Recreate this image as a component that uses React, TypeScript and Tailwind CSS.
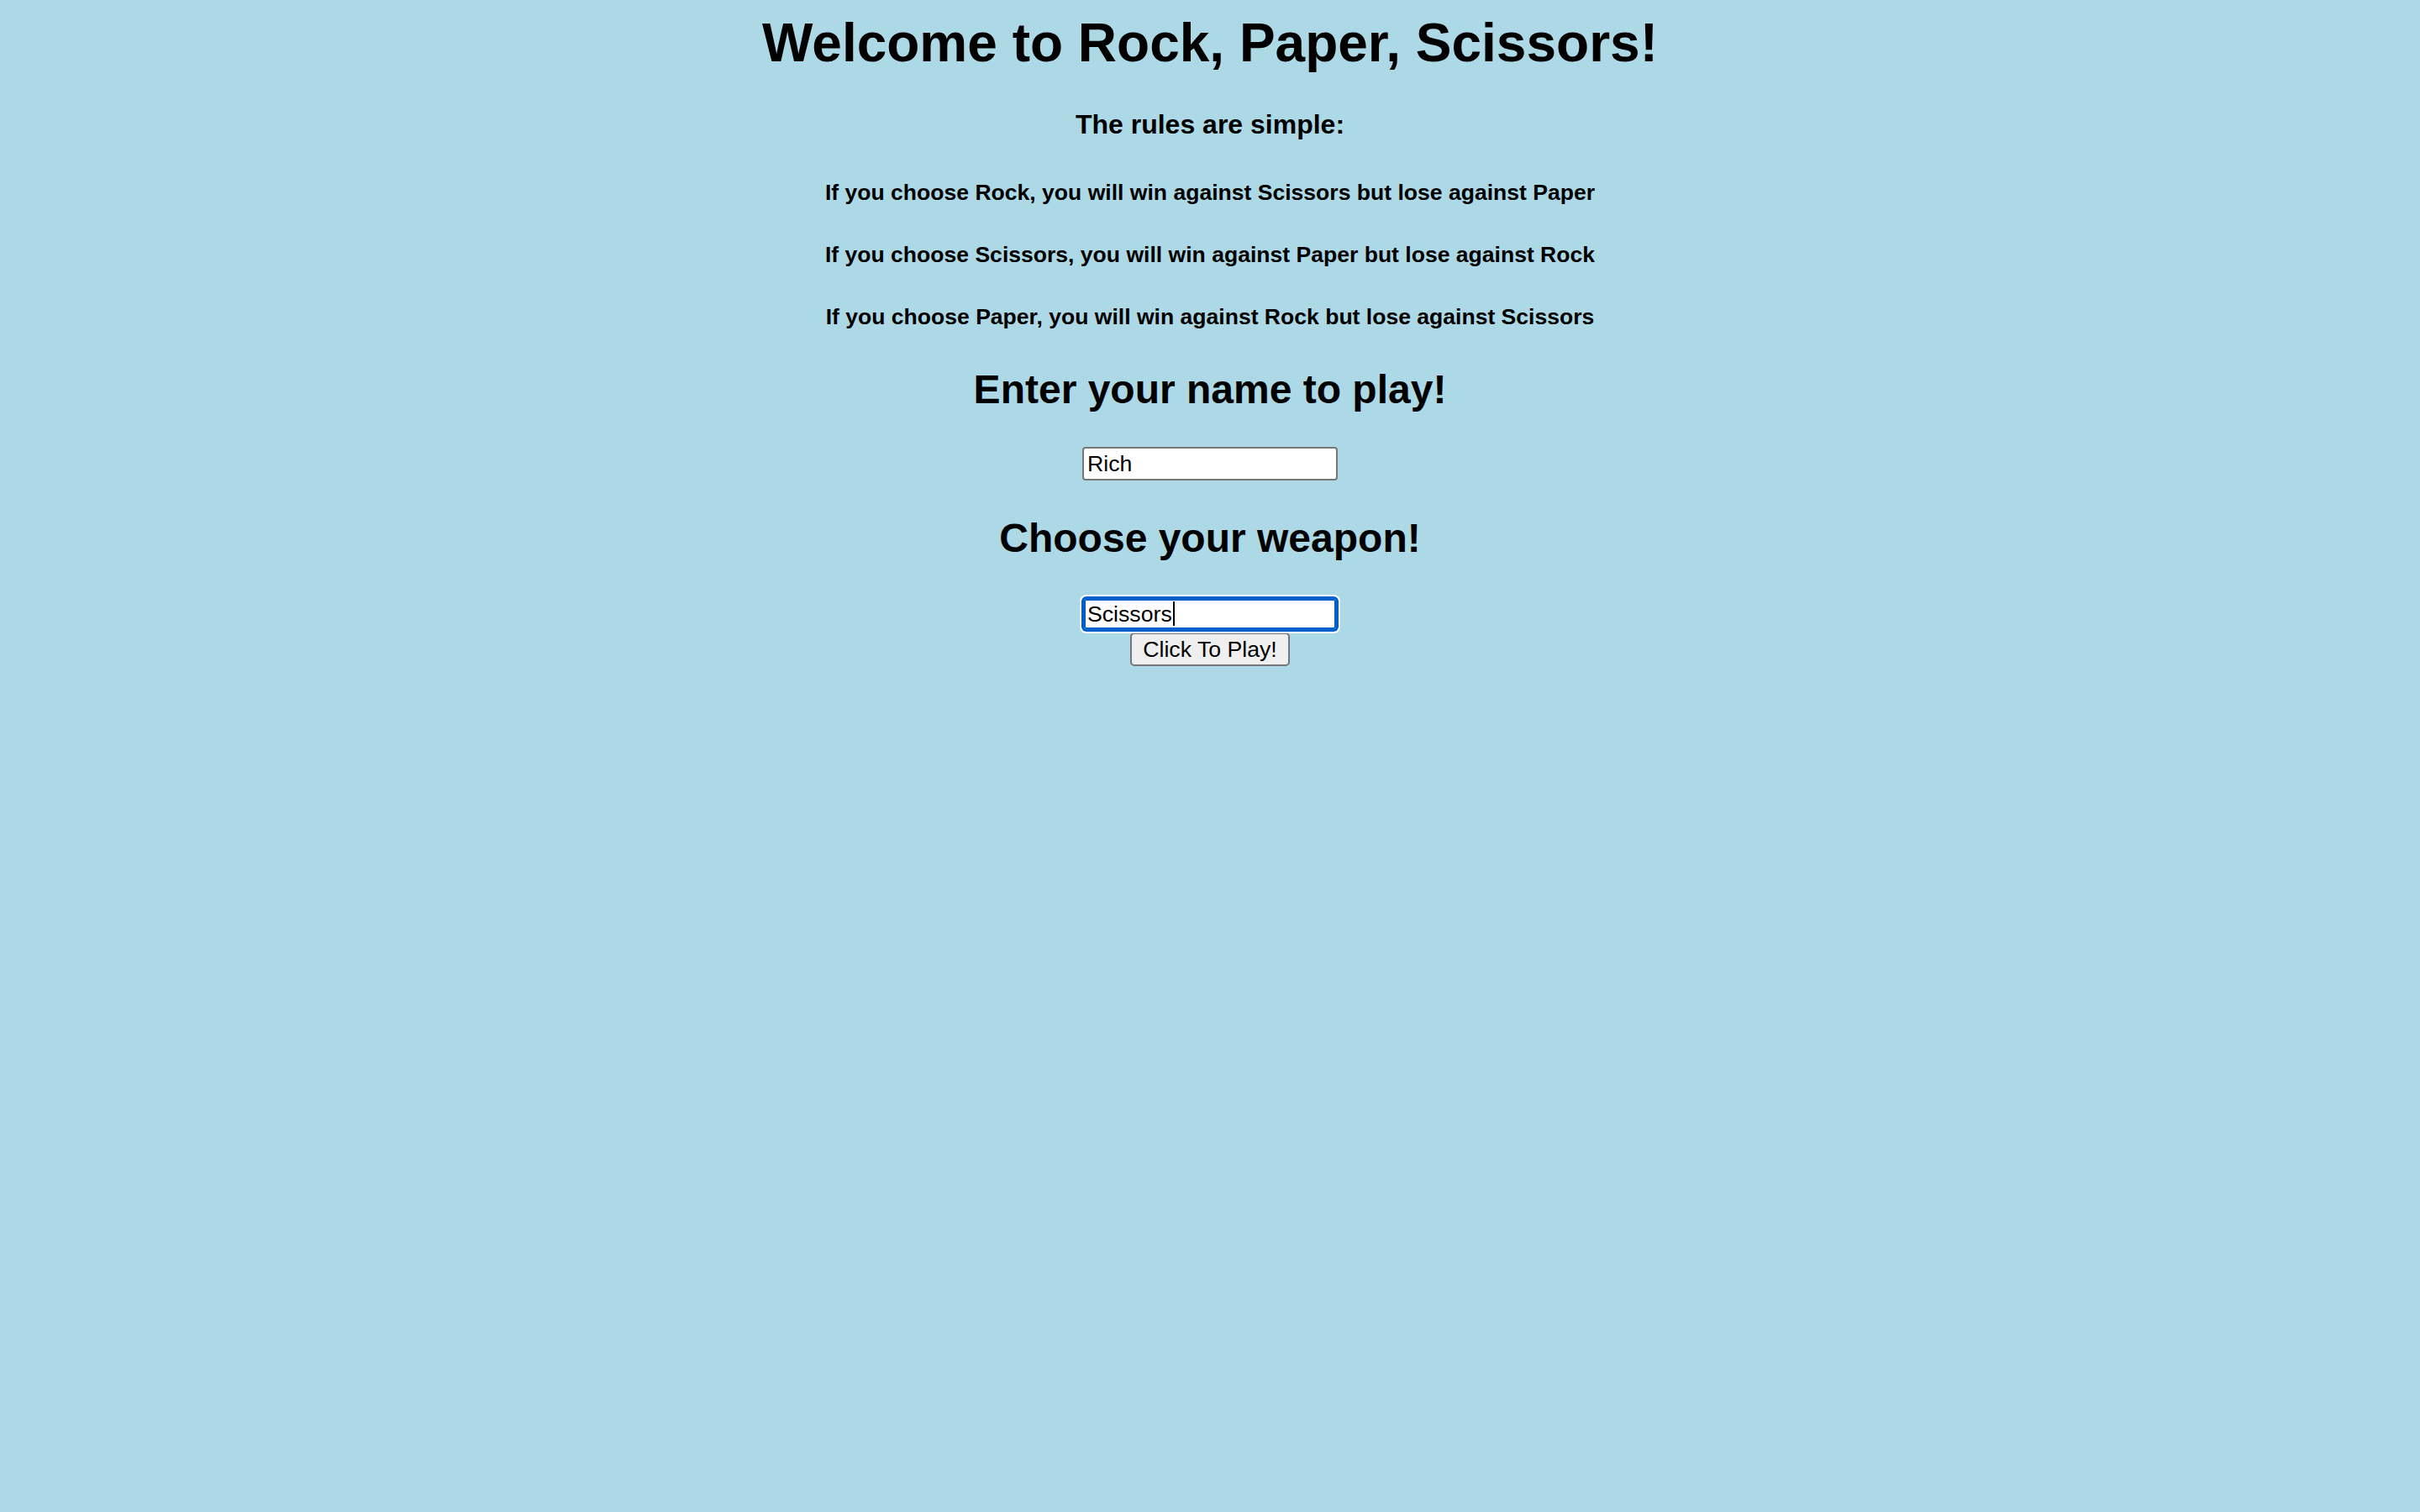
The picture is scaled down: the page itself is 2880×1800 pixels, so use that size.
import { useState } from "react";

const rules = [
  "If you choose Rock, you will win against Scissors but lose against Paper",
  "If you choose Scissors, you will win against Paper but lose against Rock",
  "If you choose Paper, you will win against Rock but lose against Scissors",
];

const App = () => {
  const [name, setName] = useState("Rich");
  const [weapon, setWeapon] = useState("Scissors");

  return (
    <div className="min-h-screen bg-[#add8e6] pt-[14px] text-center text-black font-['Liberation_Sans',Arial,sans-serif]">
      <div className="flex flex-col items-center">
        <h1 className="mb-[42px] text-[64px] font-bold leading-[74px]">
          Welcome to Rock, Paper, Scissors!
        </h1>
        <h4 className="mb-[47px] text-[32px] font-bold leading-[37px]">The rules are simple:</h4>

        {/* Rules */}
        {rules.map((rule) => (
          <h5 key={rule} className="mb-[44px] text-[26.56px] font-bold leading-[30px]">
            {rule}
          </h5>
        ))}

        <h2 className="mb-[41px] text-[48px] font-bold leading-[55px]">Enter your name to play!</h2>
        <input
          type="text"
          value={name}
          onChange={(e) => setName(e.target.value)}
          className="mb-[41px] h-[40px] w-[304px] rounded-[4px] border-2 border-[#767676] bg-white px-[4px] text-left text-[26.67px] leading-[30px] text-black outline-none"
        />

        <h2 className="mb-[43px] text-[48px] font-bold leading-[55px]">Choose your weapon!</h2>
        <div className="relative">
          <input
            type="text"
            value={weapon}
            onChange={(e) => setWeapon(e.target.value)}
            className="h-[40px] w-[304px] rounded-[5px] border-2 border-[#005fcc] bg-white px-[4px] text-left text-[26.67px] leading-[30px] text-black caret-transparent outline-none shadow-[0_0_0_1px_#005fcc,0_0_0_3px_#ffffff,inset_0_0_0_2px_#005fcc]"
          />
          {/* text caret */}
          <span className="pointer-events-none absolute left-[108px] top-[5px] h-[29px] w-[2px] bg-black" />
        </div>
        <button className="mt-[2px] h-[40px] rounded-[5px] border-2 border-[#767676] bg-[#efefef] px-[13.5px] text-[26.67px] leading-[30px] text-black">
          Click To Play!
        </button>
      </div>
    </div>
  );
};

export default App;
